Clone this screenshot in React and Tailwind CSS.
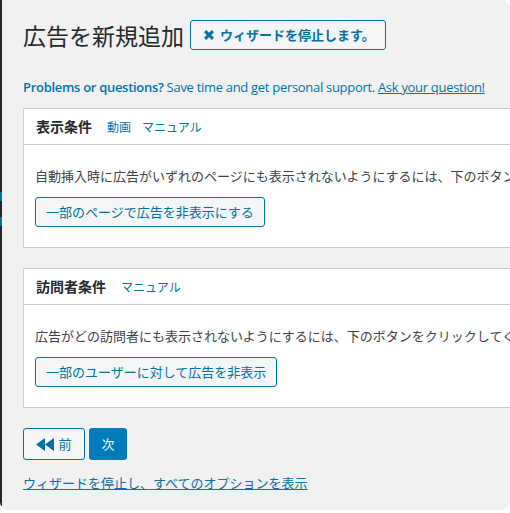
import React from "react";

const jp = { fontFamily: '"Noto Sans CJK JP", "Noto Sans", sans-serif' };

function XIcon() {
  return (
    <svg width="12" height="12" viewBox="0 0 20 20" className="shrink-0">
      <path d="M3.5 3.5 L16.5 16.5 M16.5 3.5 L3.5 16.5" stroke="currentColor" strokeWidth="5" strokeLinecap="butt" fill="none" />
    </svg>
  );
}

function BackIcon() {
  return (
    <svg width="19" height="13" viewBox="0 0 19 13" className="shrink-0">
      <path d="M0 6.5 L9 0 L9 13 Z M9 6.5 L18 0 L18 13 Z" fill="currentColor" />
    </svg>
  );
}

function Box({ title, links, text, button }) {
  return (
    <div className="w-[620px] bg-white border border-[#ccd0d4]">
      <div className="h-[36px] flex items-center px-[12px] border-b border-[#ccd0d4]">
        <span className="text-[14px] font-bold text-[#23282d]">{title}</span>
        {links.map((l, i) => (
          <span key={l} className={`text-[12px] text-[#0073aa] ${i === 0 ? "ml-[15px]" : "ml-[11px]"}`}>{l}</span>
        ))}
      </div>
      <div className="px-[11px] pt-[21px] pb-[20px]">
        <p className="text-[13px] leading-[20px] text-[#3c434a] whitespace-nowrap">{text}</p>
        <button className="mt-[11px] h-[30px] px-[10px] rounded-[3px] border border-[#0071a1] bg-[#f3f5f6] text-[13px] text-[#0071a1]">
          {button}
        </button>
      </div>
    </div>
  );
}

export default function App() {
  return (
    <div className="w-[510px] h-[513px] bg-white overflow-hidden" style={jp}>
      <div className="relative h-[510px] flex bg-[#f1f1f1] rounded-tr-[8px] rounded-b-[8px] overflow-hidden">
        <div className="w-[2px] h-[506px] bg-[#23282d] shrink-0 flex flex-col">
          <div className="h-[192px]" />
          <div className="h-[9px] bg-[#0073aa]" />
          <div className="h-[16px]" />
          <div className="h-[9px] bg-[#0073aa]" />
        </div>
        <div className="pl-[21px] pt-[20px] min-w-0 flex-1">
          <div className="flex items-center gap-[6px]">
            <h1 className="text-[23px] leading-[30px] text-[#23282d]">広告を新規追加</h1>
            <button className="h-[30px] flex items-center gap-[5px] pl-[12px] pr-[10px] rounded-[3px] border border-[#0071a1] bg-[#f3f5f6] text-[13px] font-semibold text-[#0071a1]">
              <XIcon />
              ウィザードを停止します。
            </button>
          </div>

          <p className="mt-[27px] text-[13px] leading-[20px] tracking-[-0.3px] text-[#0073aa] whitespace-nowrap" style={{ fontFamily: '"Open Sans", "Noto Sans", sans-serif' }}>
            <span className="font-semibold">Problems or questions?</span> Save time and get personal support.{" "}
            <span className="underline">Ask your question!</span>
          </p>

          <div className="mt-[11px]">
            <Box
              title="表示条件"
              links={["動画", "マニュアル"]}
              text="自動挿入時に広告がいずれのページにも表示されないようにするには、下のボタンをクリックしてください。"
              button="一部のページで広告を非表示にする"
            />
          </div>
          <div className="mt-[20px]">
            <Box
              title="訪問者条件"
              links={["マニュアル"]}
              text="広告がどの訪問者にも表示されないようにするには、下のボタンをクリックしてください。"
              button="一部のユーザーに対して広告を非表示"
            />
          </div>

          <div className="mt-[20px] flex gap-[4px]">
            <button className="h-[32px] w-[62px] flex items-center justify-center gap-[3px] rounded-[3px] border border-[#0071a1] bg-[#f3f5f6] text-[13px] text-[#0071a1]">
              <BackIcon />
              前
            </button>
            <button className="h-[32px] w-[38px] rounded-[3px] bg-[#007cba] text-[13px] text-white">次</button>
          </div>

          <a className="block mt-[13px] text-[13px] leading-[20px] text-[#0073aa] underline">
            ウィザードを停止し、すべてのオプションを表示
          </a>
        </div>
      </div>
    </div>
  );
}
